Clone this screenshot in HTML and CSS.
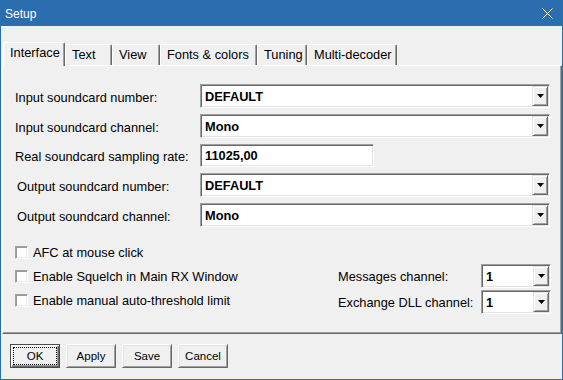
FILE: index.html
```html
<!DOCTYPE html>
<html lang="en">
<head>
<meta charset="utf-8">
<title>Setup</title>
<link rel="stylesheet" href="styles.css">
</head>
<body>
<div class="window">
  <div class="titlebar">
    <span class="title">Setup</span>
    <svg class="close" width="11" height="11" viewBox="0 0 11 11"><path d="M0.5 0.5 L10.5 10.5 M10.5 0.5 L0.5 10.5" stroke="#fff" stroke-width="1" fill="none"/></svg>
  </div>
  <div class="client">
    <div class="tabs">
      <div class="tab active w-interface">Interface</div>
      <div class="tab w-text">Text</div>
      <div class="tab w-view">View</div>
      <div class="tab w-fonts">Fonts &amp; colors</div>
      <div class="tab w-tuning">Tuning</div>
      <div class="tab w-multi">Multi-decoder</div>
    </div>
    <div class="panel">
      <div class="rows">
        <div class="row">
          <span class="lbl">Input soundcard number:</span>
          <div class="combo wide"><span class="val">DEFAULT</span><span class="dd"><svg width="7" height="4" viewBox="0 0 7 4"><path d="M0 0 H7 L3.5 4 Z" fill="#000"/></svg></span></div>
        </div>
        <div class="row">
          <span class="lbl">Input soundcard channel:</span>
          <div class="combo wide"><span class="val">Mono</span><span class="dd"><svg width="7" height="4" viewBox="0 0 7 4"><path d="M0 0 H7 L3.5 4 Z" fill="#000"/></svg></span></div>
        </div>
        <div class="row row-edit">
          <span class="lbl">Real soundcard sampling rate:</span>
          <div class="edit"><span class="val">11025,00</span></div>
        </div>
        <div class="row">
          <span class="lbl indent">Output soundcard number:</span>
          <div class="combo wide"><span class="val">DEFAULT</span><span class="dd"><svg width="7" height="4" viewBox="0 0 7 4"><path d="M0 0 H7 L3.5 4 Z" fill="#000"/></svg></span></div>
        </div>
        <div class="row">
          <span class="lbl indent">Output soundcard channel:</span>
          <div class="combo wide"><span class="val">Mono</span><span class="dd"><svg width="7" height="4" viewBox="0 0 7 4"><path d="M0 0 H7 L3.5 4 Z" fill="#000"/></svg></span></div>
        </div>
      </div>
      <div class="bottom">
        <div class="checks">
          <div class="check"><span class="box"></span><span>AFC at mouse click</span></div>
          <div class="check"><span class="box"></span><span>Enable Squelch in Main RX Window</span></div>
          <div class="check"><span class="box"></span><span>Enable manual auto-threshold limit</span></div>
        </div>
        <div class="channels">
          <div class="chrow">
            <span class="chlbl">Messages channel:</span>
            <div class="combo small"><span class="val">1</span><span class="dd"><svg width="7" height="4" viewBox="0 0 7 4"><path d="M0 0 H7 L3.5 4 Z" fill="#000"/></svg></span></div>
          </div>
          <div class="chrow">
            <span class="chlbl">Exchange DLL channel:</span>
            <div class="combo small"><span class="val">1</span><span class="dd"><svg width="7" height="4" viewBox="0 0 7 4"><path d="M0 0 H7 L3.5 4 Z" fill="#000"/></svg></span></div>
          </div>
        </div>
      </div>
    </div>
    <div class="buttons">
      <div class="button default"><span class="focus">OK</span></div>
      <div class="button"><span class="face">Apply</span></div>
      <div class="button"><span class="face">Save</span></div>
      <div class="button"><span class="face">Cancel</span></div>
    </div>
  </div>
</div>
</body>
</html>
```

FILE: styles.css
```css
html, body {
  margin: 0;
  padding: 0;
}
body {
  background: #f0f0f0;
  font-family: "Liberation Sans", Arial, sans-serif;
  font-size: 12.8px;
  color: #000;
}
.window {
  width: 563px;
  height: 380px;
  box-sizing: border-box;
  border: 1px solid #2b6eb0;
  border-top: 0;
  display: flex;
  flex-direction: column;
  background: #f0f0f0;
  overflow: hidden;
}
.titlebar {
  height: 26px;
  margin: 0 -1px;
  flex: 0 0 26px;
  background: #2b6eb0;
  color: #fff;
  display: flex;
  align-items: center;
  justify-content: space-between;
  padding: 1px 10px 0 5px;
  box-sizing: border-box;
  font-size: 12px;
}
.close {
  display: block;
  margin-top: -1px;
}
.client {
  flex: 1;
  display: flex;
  flex-direction: column;
  padding: 16px 0 0 1px;
}
.tabs {
  display: flex;
  align-items: flex-end;
  height: 23px;
  padding-left: 1px;
}
.tab {
  box-sizing: border-box;
  height: 21px;
  padding: 2px 0 0 6px;
  line-height: 15px;
  white-space: nowrap;
  background: #f0f0f0;
  border-top: 1px solid #fff;
  border-left: 1px solid #fff;
  border-right: 1px solid #696969;
  box-shadow: inset -1px 0 0 #a0a0a0;
  border-radius: 2px 2px 0 0;
}
.tab.active {
  height: 24px;
  margin-bottom: -1px;
  position: relative;
  z-index: 1;
}
.w-interface { width: 62px; }
.w-text { width: 47px; }
.w-view { width: 48px; }
.w-fonts { width: 97px; }
.w-tuning { width: 50px; }
.w-multi { width: 90px; }

.panel {
  height: 269px;
  box-sizing: border-box;
  border-top: 1px solid #fff;
  border-left: 1px solid #fff;
  border-right: 1px solid #696969;
  border-bottom: 1px solid #696969;
  box-shadow: inset -1px -1px 0 #a0a0a0;
  padding: 18px 0 0 12px;
  display: flex;
  flex-direction: column;
}
.rows {
  display: flex;
  flex-direction: column;
  gap: 6px;
}
.row {
  display: flex;
  align-items: center;
  height: 24px;
}
.row-edit {
  height: 23px;
}
.lbl {
  width: 185px;
  flex: 0 0 185px;
  padding-top: 2px;
  box-sizing: border-box;
  white-space: nowrap;
}
.lbl.indent {
  padding-left: 2px;
}
.combo, .edit {
  box-sizing: border-box;
  background: #fff;
  border: 1px solid;
  border-color: #a0a0a0 #fff #fff #a0a0a0;
  box-shadow: inset 1px 1px 0 #696969, inset -1px -1px 0 #e3e3e3;
  display: flex;
  align-items: center;
  font-weight: bold;
}
.combo {
  height: 24px;
  padding: 1px;
}
.combo.wide {
  width: 350px;
}
.combo.small {
  width: 70px;
}
.edit {
  width: 174px;
  height: 23px;
}
.val {
  flex: 1;
  padding-left: 3px;
  white-space: nowrap;
}
.edit .val {
  padding-left: 4px;
}
.dd {
  box-sizing: border-box;
  width: 16px;
  height: 20px;
  background: #f0f0f0;
  border: 1px solid;
  border-color: #e3e3e3 #696969 #696969 #e3e3e3;
  box-shadow: inset 1px 1px 0 #fff, inset -1px -1px 0 #a0a0a0;
  display: flex;
  align-items: center;
  justify-content: center;
}
.dd svg {
  display: block;
  margin-left: 1px;
}
.bottom {
  display: flex;
  align-items: flex-start;
  margin-top: 13px;
}
.checks {
  width: 323px;
  display: flex;
  flex-direction: column;
}
.check {
  height: 24px;
  display: flex;
  align-items: center;
  white-space: nowrap;
}
.box {
  box-sizing: border-box;
  width: 13px;
  height: 13px;
  margin-right: 5px;
  background: #fff;
  border: 1px solid;
  border-color: #a0a0a0 #fff #fff #a0a0a0;
  box-shadow: inset 1px 1px 0 #9a9a9a, inset -1px -1px 0 #ececec;
}
.channels {
  margin-top: 24px;
  display: flex;
  flex-direction: column;
  gap: 2px;
}
.chrow {
  display: flex;
  align-items: center;
}
.chlbl {
  width: 143px;
  padding-top: 1px;
  white-space: nowrap;
}
.buttons {
  display: flex;
  gap: 6px;
  padding: 10px 0 0 8px;
}
.button {
  box-sizing: border-box;
  width: 50px;
  height: 24px;
  background: #f0f0f0;
  border: 1px solid;
  border-color: #fff #696969 #696969 #fff;
  box-shadow: inset 1px 1px 0 #e3e3e3, inset -1px -1px 0 #a0a0a0;
  display: flex;
  align-items: center;
  justify-content: center;
  font-size: 11.5px;
}
.button.default {
  border: 1px solid #4a4a4a;
  box-shadow: inset 1px 1px 0 #fff, inset -1px -1px 0 #696969, inset -2px -2px 0 #a0a0a0;
  padding: 2px;
  align-items: stretch;
  justify-content: stretch;
}
.focus {
  flex: 1;
  border: 1px dotted #000;
  display: flex;
  align-items: center;
  justify-content: center;
}
```
